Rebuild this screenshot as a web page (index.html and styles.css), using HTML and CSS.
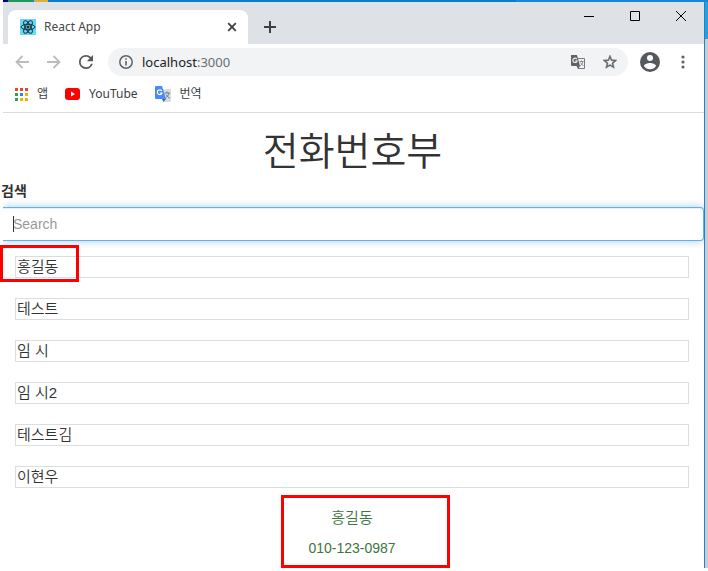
FILE: index.html
```html
<!DOCTYPE html>
<html lang="ko">
<head>
<meta charset="utf-8">
<meta name="viewport" content="width=device-width, initial-scale=1">
<title>React App</title>
<link rel="stylesheet" href="styles.css">
</head>
<body>
<div class="desktop">
<div class="window">
  <header class="titlebar">
    <div class="tab">
      <svg class="favicon" width="16" height="16" viewBox="0 0 16 16" aria-hidden="true">
        <rect width="16" height="16" rx="1" fill="#61dafb"/>
        <g fill="none" stroke="#20303a" stroke-width="1"><ellipse cx="8" cy="8" rx="7" ry="2.7"/><ellipse cx="8" cy="8" rx="7" ry="2.7" transform="rotate(60 8 8)"/><ellipse cx="8" cy="8" rx="7" ry="2.7" transform="rotate(120 8 8)"/></g>
        <circle cx="8" cy="8" r="1.5" fill="#20303a"/>
      </svg>
      <span class="tab-title">React App</span>
      <button class="icon-button tab-close" aria-label="Close tab"><svg width="10" height="10" viewBox="0 0 10 10"><path d="M1.2 1.2l7.6 7.6M8.8 1.2L1.2 8.8" stroke="#3c4043" stroke-width="1.8"/></svg></button>
    </div>
    <button class="icon-button new-tab" aria-label="New tab"><svg width="12" height="12" viewBox="0 0 12 12"><path d="M6 0v12M0 6h12" stroke="#3c4043" stroke-width="2"/></svg></button>
    <div class="window-controls">
      <button class="icon-button" aria-label="Minimize"><svg width="10" height="10" viewBox="0 0 10 10"><path d="M0 5.5h10" stroke="#000"/></svg></button>
      <button class="icon-button" aria-label="Maximize"><svg width="10" height="10" viewBox="0 0 10 10"><path d="M.5.5h9v9h-9z" fill="none" stroke="#000"/></svg></button>
      <button class="icon-button" aria-label="Close"><svg width="10" height="10" viewBox="0 0 10 10"><path d="M0 0l10 10M10 0L0 10" stroke="#000"/></svg></button>
    </div>
  </header>
  <nav class="toolbar" aria-label="Navigation">
    <button class="icon-button" aria-label="Back"><svg width="14" height="14" viewBox="0 0 14 14" fill="none" stroke="#babcbe" stroke-width="1.8"><path d="M14 7H1.5M7.5 1L1.5 7l6 6"/></svg></button>
    <button class="icon-button" aria-label="Forward"><svg width="14" height="14" viewBox="0 0 14 14" fill="none" stroke="#babcbe" stroke-width="1.8"><path d="M0 7h12.500M6.500 1l6 6-6 6"/></svg></button>
    <button class="icon-button" aria-label="Reload"><svg width="14" height="14" viewBox="4 4 16 16"><path fill="#55585c" d="M17.650 6.350A7.960 7.960 0 0 0 12 4a8 8 0 1 0 7.730 10h-2.080A6 6 0 1 1 12 6c1.660 0 3.140.690 4.220 1.780L13 11h7V4z"/></svg></button>
    <div class="address">
      <svg width="14" height="14" viewBox="0 0 14 14" aria-hidden="true"><circle cx="7" cy="7" r="6.200" fill="none" stroke="#5f6368" stroke-width="1.500"/><path d="M7 3.200v1.600M7 6v4.500" stroke="#5f6368" stroke-width="1.600"/></svg>
      <span class="url">localhost<span class="port">:3000</span></span>
      <button class="icon-button" aria-label="Translate this page"><svg width="14" height="15" viewBox="0 0 14 15"><path d="M6 3.500h7.500v10H7" fill="#f1f3f4" stroke="#777a7e"/><path d="M0 0h6l3 11H1a1 1 0 0 1-1-1z" fill="#5f6368"/><path d="M5.500 11H9l-2 3z" fill="#5f6368"/><path d="M6 4.200A2.200 2.200 0 1 0 6.200 6H4.200" fill="none" stroke="#f1f3f4" stroke-width="1.100"/><path d="M8.500 6.500h4M10.500 5.500v1M12 6.500c-.5 2-1.500 3.500-3 4.500M9.500 7.500l3 3.500" fill="none" stroke="#777a7e" stroke-width=".8"/></svg></button>
      <button class="icon-button star" aria-label="Bookmark this page"><svg width="14" height="14" viewBox="2 2 20 20"><path fill="#5f6368" stroke="#5f6368" stroke-width=".6" d="M22 9.240l-7.190-.620L12 2 9.190 8.630 2 9.240l5.460 4.730L5.820 21 12 17.270 18.180 21l-1.630-7.030zM12 15.400l-3.760 2.270 1-4.280-3.320-2.880 4.380-.380L12 6.100l1.710 4.040 4.380.380-3.320 2.880 1 4.280z"/></svg></button>
    </div>
    <button class="icon-button profile" aria-label="Profile"><svg width="20" height="20" viewBox="2 2 20 20"><path fill="#55585d" d="M12 2a10 10 0 1 0 0 20 10 10 0 0 0 0-20zm0 3a3 3 0 1 1 0 6 3 3 0 0 1 0-6zm0 14.200a7.200 7.200 0 0 1-6-3.220c.030-1.990 4-3.080 6-3.080s5.970 1.090 6 3.080a7.200 7.200 0 0 1-6 3.220z"/></svg></button>
    <button class="icon-button" aria-label="Menu"><svg width="4" height="14" viewBox="0 0 4 14" fill="#5f6368"><circle cx="2" cy="2" r="1.600"/><circle cx="2" cy="7" r="1.600"/><circle cx="2" cy="12" r="1.600"/></svg></button>
  </nav>
  <nav class="bookmarks" aria-label="Bookmarks">
    <a class="bookmark" href="#"><svg width="13" height="13" viewBox="0 0 13 13" aria-hidden="true"><path fill="#ea4335" d="M0 0h3v3H0zM5 0h3v3H5zM10 0h3v3h-3z"/><path fill="#34a050" d="M0 5h3v3H0zM0 10h3v3H0z"/><path fill="#2684fc" d="M5 5h3v3H5z"/><path fill="#f9b000" d="M10 5h3v3h-3zM5 10h3v3H5zM10 10h3v3h-3z"/></svg><span>앱</span></a>
    <a class="bookmark" href="#"><svg width="15" height="12" viewBox="0 0 15 12" aria-hidden="true"><rect width="15" height="12" rx="3" fill="#f00"/><path d="M6 3.500L10 6 6 8.500z" fill="#fff"/></svg><span>YouTube</span></a>
    <a class="bookmark" href="#"><svg width="16" height="16" viewBox="0 0 16 16" aria-hidden="true"><path d="M6 3h9a1 1 0 0 1 1 1v11a1 1 0 0 1-1 1H8z" fill="#dadce0"/><path d="M1 0h6l4 13H1a1 1 0 0 1-1-1V1a1 1 0 0 1 1-1z" fill="#4a8af4"/><path d="M7 13h4l-2.500 3z" fill="#3367d6"/><path d="M6.800 5A2.400 2.400 0 1 0 7 7H4.800" fill="none" stroke="#fff" stroke-width="1.200"/><path d="M9.500 7H15M12 5.500V7M14 7c-.5 2-1.700 4-3.500 5M11 8.500l3.500 4" fill="none" stroke="#6b7c88"/></svg><span>번역</span></a>
  </nav>
  <main class="page">
    <h1>전화번호부</h1>
    <div class="search">
      <label for="search">검색</label>
      <div class="field">
        <input id="search" type="text" placeholder="Search">
      </div>
    </div>
    <ul class="contacts">
      <li class="marked">홍길동</li>
      <li>테스트</li>
      <li>임 시</li>
      <li>임 시2</li>
      <li>테스트김</li>
      <li>이현우</li>
    </ul>
    <section class="detail" aria-label="홍길동">
      <p class="name">홍길동</p>
      <p>010-123-0987</p>
    </section>
  </main>
</div>
</div>
</body>
</html>
```

FILE: styles.css
```css
*, *::before, *::after { box-sizing: border-box; }

body {
  margin: 0;
  background: #fff;
  color: #333;
  font: 14px/20px "Liberation Sans", "Noto Sans CJK KR", sans-serif;
}

.desktop {
  min-height: calc(100vh - 3px);
  margin-bottom: 3px;
  padding: 2px 3px 0;
  background:
    linear-gradient(90deg, #fff 3px, #000080 3px 8px, #209858 8px 32px, #168ccc 32px 34px, #d8b040 34px 48px, #0880c8 48px 516px, transparent 516px) 0 0 / 100% 2px no-repeat,
    linear-gradient(#1787d8, #1787d8) 0 0 / 100% 2px no-repeat,
    linear-gradient(#28a0dc 39px, #ccc 39px) right / 3px 100% no-repeat,
    #fff;
}

.window {
  min-height: calc(100vh - 5px);
  border-right: 1px solid #1883d7;
  background: #fff;
}

.icon-button {
  display: flex;
  align-items: center;
  justify-content: center;
  flex: none;
  padding: 0;
  border: 0;
  background: none;
}

svg { display: block; flex: none; }

.titlebar {
  display: flex;
  height: 42px;
  background: #dee1e6;
}

.tab {
  display: flex;
  align-items: center;
  width: 240px;
  margin: 8px 0 0 5px;
  padding: 0 11px 0 12px;
  gap: 8px;
  border-radius: 8px 8px 0 0;
  background: #fff;
}

.tab-title {
  flex: 1;
  color: #45484c;
  font: 12px/16px "Noto Sans", sans-serif;
}

.new-tab { width: 44px; padding-top: 8px; }

.window-controls {
  display: flex;
  height: 28px;
  margin-left: auto;
}

.window-controls .icon-button { width: 46px; }

.toolbar {
  display: flex;
  align-items: center;
  height: 36px;
  padding: 0 19px 0 12px;
  gap: 18px;
}

.address {
  display: flex;
  flex: 1;
  align-items: center;
  height: 28px;
  margin-left: -3px;
  padding: 0 11px;
  gap: 9px;
  border-radius: 14px;
  background: #f1f3f4;
}

.url {
  flex: 1;
  color: #202124;
  font: 13px/20px "Noto Sans", sans-serif;
}

.port { color: #6a6e73; }

.star { margin-left: 9px; }

.profile { margin: 0 3px 0 -6px; }

.bookmarks {
  display: flex;
  align-items: center;
  height: 33px;
  padding: 0 12px 4px;
  gap: 17px;
  border-bottom: 1px solid #dadce0;
}

.bookmark {
  display: flex;
  align-items: center;
  gap: 9px;
  color: #3c4043;
  font: 12px/16px "Noto Sans", "Noto Sans CJK KR", sans-serif;
  text-decoration: none;
}

h1 {
  margin: 19px 0 9px;
  padding-right: 2px;
  font-size: 39px;
  font-weight: 350;
  line-height: 40px;
  text-align: center;
}

.search label {
  display: block;
  margin: 0 0 6px -2px;
  font-weight: 700;
}

.field { position: relative; }

.field::before {
  content: "";
  position: absolute;
  z-index: 1;
  top: 9px;
  left: 10px;
  width: 1px;
  height: 16px;
  background: #333;
}

.search input {
  display: block;
  width: 100%;
  height: 34px;
  padding: 6px 10px;
  border: 1px solid #66afe9;
  border-left: 0;
  border-radius: 0 4px 4px 0;
  outline: 0;
  background: #fff;
  box-shadow: inset 0 1px 1px rgba(0, 0, 0, .075), 0 0 8px rgba(102, 175, 233, .6);
  clip-path: inset(-8px 0 -8px 0);
  color: #555;
  font: inherit;
}

.search input::placeholder { color: #999; opacity: 1; }

.contacts {
  display: grid;
  gap: 20px;
  margin: 15px 15px 0 12px;
  padding: 0;
  list-style: none;
}

.contacts li {
  position: relative;
  padding: 0 1px;
  border: 1px solid #ddd;
  font-size: 15px;
  font-weight: 350;
}

.marked::after {
  content: "";
  position: absolute;
  top: -12px;
  left: -16px;
  width: 79px;
  height: 37px;
  border: 3px solid #f00;
}

.detail {
  position: relative;
  left: 12px;
  width: 169px;
  margin: 7px auto 0;
  padding: 10px 27px 7px 0;
  border: 3px solid #f00;
  color: #3c763d;
  text-align: center;
}

.detail p { margin: 0; }

.detail .name { margin-bottom: 10px; font-size: 15px; font-weight: 350; }
```
